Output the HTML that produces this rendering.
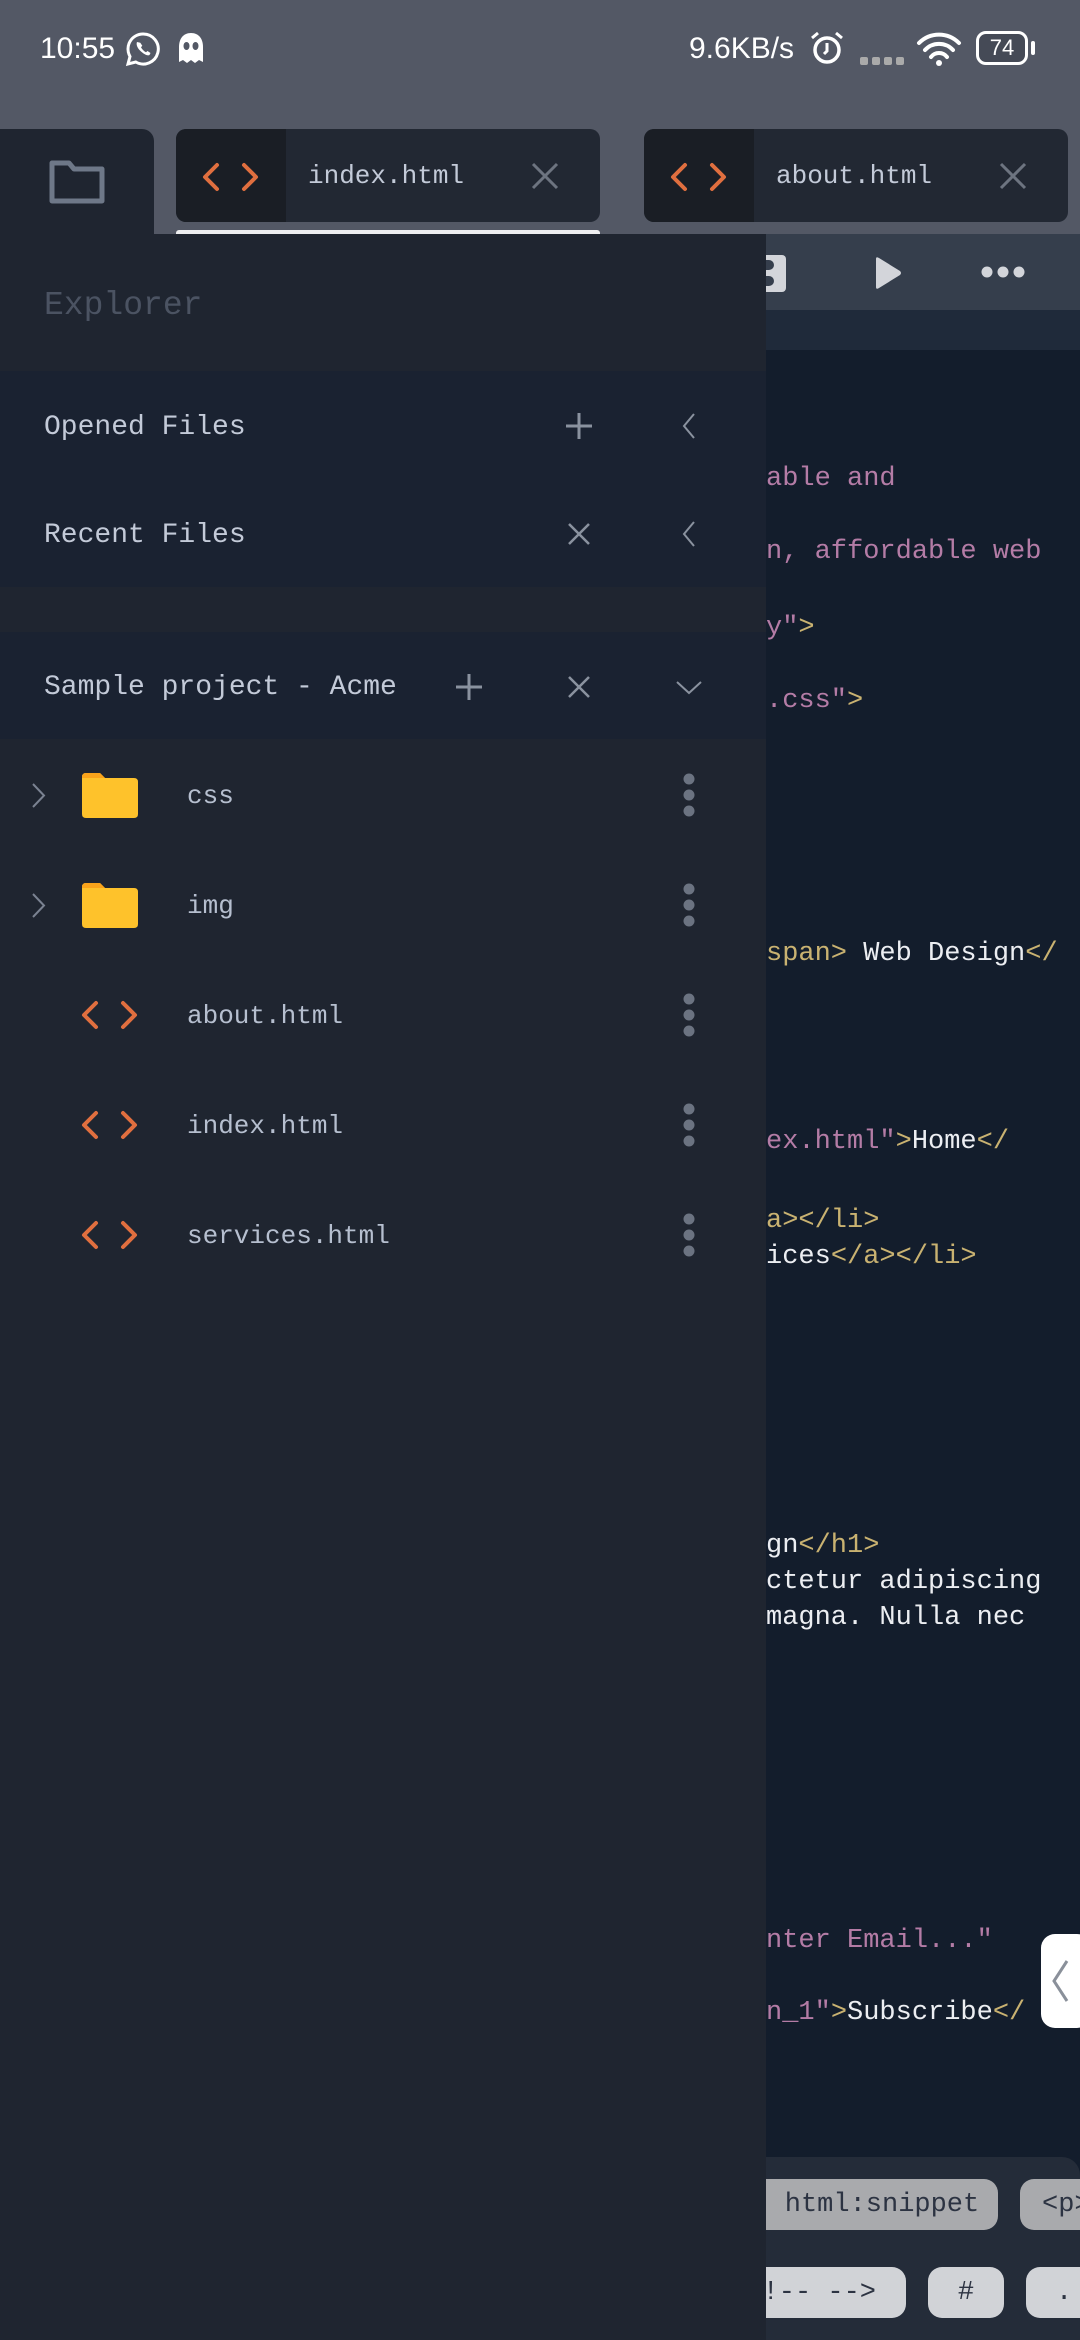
<!DOCTYPE html>
<html><head><meta charset="utf-8"><style>
*{margin:0;padding:0;box-sizing:border-box}
body{width:1080px;height:2340px;overflow:hidden;background:#535865;position:relative;font-family:"Liberation Mono",monospace}
.a{position:absolute}
.st{color:#fff;font-family:"Liberation Sans",sans-serif;font-size:30px}
.lbl{color:#c3cad8;font-size:28px;white-space:nowrap}
.tr{color:#b6bfcf;font-size:26px;white-space:nowrap}
.code{font-size:27px;white-space:pre;line-height:36px}
.p{color:#b47ca6}.y{color:#c9b271}.w{color:#eceef2}
.chip{position:absolute;border-radius:14px;font-size:27px;color:#2c3342;display:flex;align-items:center;justify-content:center}
</style></head><body>
<div class="a st" style="left:40px;top:32px">10:55</div>
<svg class="a" style="left:125px;top:31px" width="36" height="36" viewBox="0 0 36 36"><path d="M18 3a15 15 0 0 0-13 22.5L3 33l7.8-2A15 15 0 1 0 18 3z" fill="none" stroke="#fff" stroke-width="3"/><path d="M12 11c-1 2 0 6 4 9.5s7 4.5 8.5 3.5l1-2-3-2-1.5 1.2c-2-1-4-3-5-5l1.3-1.5-2-3z" fill="#fff"/></svg>
<svg class="a" style="left:177px;top:32px" width="28" height="32" viewBox="0 0 28 32"><path d="M14 1C6 1 2 7 2 15v15l4-2 4 3 4-3 4 3 4-3 4 2V15C26 7 22 1 14 1z" fill="#fff"/><ellipse cx="9.5" cy="14" rx="3" ry="4" fill="#535865"/><ellipse cx="18.5" cy="14" rx="3" ry="4" fill="#535865"/></svg>
<div class="a st" style="left:689px;top:32px">9.6KB/s</div>
<svg class="a" style="left:808px;top:30px" width="38" height="36" viewBox="0 0 38 36"><circle cx="19" cy="20" r="12" fill="none" stroke="#fff" stroke-width="3.5"/><path d="M19 13v8l-3 3" stroke="#fff" stroke-width="3" fill="none"/><path d="M4 8l6-5M34 8l-6-5" stroke="#fff" stroke-width="3"/></svg>
<div class="a" style="left:860px;top:57px;width:44px;height:10px;display:flex;gap:4px"><i style="width:8px;height:8px;background:#aaa;border-radius:2px;display:block"></i><i style="width:8px;height:8px;background:#aaa;border-radius:2px;display:block"></i><i style="width:8px;height:8px;background:#aaa;border-radius:2px;display:block"></i><i style="width:8px;height:8px;background:#aaa;border-radius:2px;display:block"></i></div>
<svg class="a" style="left:915px;top:31px" width="48" height="36" viewBox="0 0 48 36"><path d="M4 12a28 28 0 0 1 40 0M10 19a19 19 0 0 1 28 0M16 26a10 10 0 0 1 16 0" fill="none" stroke="#fff" stroke-width="4" stroke-linecap="round"/><circle cx="24" cy="32" r="3" fill="#fff"/></svg>
<div class="a" style="left:976px;top:31px;width:52px;height:34px;border:3px solid #fff;border-radius:10px;background:#454a56;color:#fff;font-family:'Liberation Sans',sans-serif;font-size:22px;text-align:center;line-height:28px">74</div>
<div class="a" style="left:1031px;top:41px;width:4px;height:14px;background:#fff;border-radius:2px"></div>

<div class="a" style="left:0;top:129px;width:154px;height:120px;background:#1f2530;border-top-right-radius:12px"></div>
<svg class="a" style="left:48px;top:158px" width="58" height="48" viewBox="0 0 58 48"><path d="M4 5h17l5 6h28v32H4z" fill="none" stroke="#6e7888" stroke-width="5" stroke-linejoin="round"/></svg>
<div class="a" style="left:176px;top:129px;width:424px;height:93px;background:#222833;border-radius:10px;overflow:hidden"><div style="width:110px;height:100%;background:#1a1e25"></div></div>
<svg class="a" style="left:200px;top:162px" width="62" height="30" viewBox="0 0 62 30"><path d="M17 3L5 15l12 12M44 3l12 12-12 12" fill="none" stroke="#e06f3f" stroke-width="4" stroke-linecap="round" stroke-linejoin="round"/></svg>
<div class="a tr" style="left:308px;top:161px;color:#c3cad8">index.html</div>
<svg class="a" style="left:530px;top:161px" width="30" height="30" viewBox="0 0 30 30"><path d="M3 3l24 24M27 3L3 27" stroke="#6d7480" stroke-width="3"/></svg>
<div class="a" style="left:176px;top:230px;width:424px;height:6px;background:#eeeef0;border-radius:3px 3px 0 0"></div>
<div class="a" style="left:644px;top:129px;width:424px;height:93px;background:#222833;border-radius:10px;overflow:hidden"><div style="width:110px;height:100%;background:#1a1e25"></div></div>
<svg class="a" style="left:668px;top:162px" width="62" height="30" viewBox="0 0 62 30"><path d="M17 3L5 15l12 12M44 3l12 12-12 12" fill="none" stroke="#e06f3f" stroke-width="4" stroke-linecap="round" stroke-linejoin="round"/></svg>
<div class="a tr" style="left:776px;top:161px;color:#c3cad8">about.html</div>
<svg class="a" style="left:998px;top:161px" width="30" height="30" viewBox="0 0 30 30"><path d="M3 3l24 24M27 3L3 27" stroke="#6d7480" stroke-width="3"/></svg>

<div class="a" style="left:766px;top:234px;width:314px;height:76px;background:#353e4c"></div>
<div class="a" style="left:766px;top:310px;width:314px;height:40px;background:#1f2a3a"></div>
<div class="a" style="left:766px;top:350px;width:314px;height:1990px;background:#131d2c"></div>
<div class="a" style="left:766px;top:255px;width:20px;height:37px;background:#d3d5da;border-radius:0 4px 4px 0"></div>
<div class="a" style="left:766px;top:260px;width:8px;height:10px;background:#353e4c;border-radius:0 5px 5px 0"></div>
<div class="a" style="left:766px;top:276px;width:8px;height:10px;background:#353e4c;border-radius:0 5px 5px 0"></div>
<svg class="a" style="left:872px;top:255px" width="32" height="36" viewBox="0 0 32 36"><path d="M4 4Q4 1 7 3L28 16Q30 18 28 20L7 33Q4 35 4 32z" fill="#d3d5da"/></svg>
<svg class="a" style="left:980px;top:265px" width="46" height="14" viewBox="0 0 46 14"><circle cx="7" cy="7" r="5.5" fill="#d3d5da"/><circle cx="23" cy="7" r="5.5" fill="#d3d5da"/><circle cx="39" cy="7" r="5.5" fill="#d3d5da"/></svg>

<div class="a code" style="left:766px;top:461px"><span class="p">able and</span></div>
<div class="a code" style="left:766px;top:534px"><span class="p">n, affordable web</span></div>
<div class="a code" style="left:766px;top:610px"><span class="p">y"</span><span class="y">&gt;</span></div>
<div class="a code" style="left:766px;top:683px"><span class="p">.css"</span><span class="y">&gt;</span></div>
<div class="a code" style="left:766px;top:936px"><span class="y">span&gt;</span><span class="w"> Web Design</span><span class="y">&lt;/</span></div>
<div class="a code" style="left:766px;top:1124px"><span class="p">ex.html"</span><span class="y">&gt;</span><span class="w">Home</span><span class="y">&lt;/</span></div>
<div class="a code" style="left:766px;top:1203px"><span class="y">a&gt;&lt;/li&gt;</span></div>
<div class="a code" style="left:766px;top:1239px"><span class="w">ices</span><span class="y">&lt;/a&gt;&lt;/li&gt;</span></div>
<div class="a code" style="left:766px;top:1528px"><span class="w">gn</span><span class="y">&lt;/h1&gt;</span></div>
<div class="a code" style="left:766px;top:1564px"><span class="w">ctetur adipiscing</span></div>
<div class="a code" style="left:766px;top:1600px"><span class="w">magna. Nulla nec</span></div>
<div class="a code" style="left:766px;top:1923px"><span class="p">nter Email..."</span></div>
<div class="a code" style="left:766px;top:1995px"><span class="p">n_1"</span><span class="y">&gt;</span><span class="w">Subscribe</span><span class="y">&lt;/</span></div>

<div class="a" style="left:1041px;top:1934px;width:50px;height:94px;background:#fff;border-radius:14px"></div>
<svg class="a" style="left:1050px;top:1958px" width="20" height="46" viewBox="0 0 20 46"><path d="M17 3L4 23l13 20" fill="none" stroke="#8a909a" stroke-width="3"/></svg>

<div class="a" style="left:740px;top:2157px;width:340px;height:183px;background:#242c39;border-top-right-radius:18px"></div>
<div class="chip" style="left:752px;top:2179px;width:246px;height:51px;background:#a9aaad;padding-left:14px">html:snippet</div>
<div class="chip" style="left:1020px;top:2179px;width:120px;height:51px;background:#a9aaad;justify-content:flex-start;padding-left:22px">&lt;p&gt;</div>
<div class="chip" style="left:740px;top:2267px;width:166px;height:51px;background:#d1d3d7;justify-content:flex-end;padding-right:30px">!-- --&gt;</div>
<div class="chip" style="left:928px;top:2267px;width:76px;height:51px;background:#d1d3d7">#</div>
<div class="chip" style="left:1026px;top:2267px;width:100px;height:51px;background:#d1d3d7;justify-content:flex-start;padding-left:30px">.</div>

<div class="a" style="left:0;top:234px;width:766px;height:2106px;background:#1f2530"></div>
<div class="a" style="left:44px;top:287px;color:#4b5362;font-size:33px">Explorer</div>
<div class="a" style="left:0;top:371px;width:766px;height:216px;background:#1a2231"></div>
<div class="a" style="left:0;top:632px;width:766px;height:107px;background:#1a2231"></div>
<div class="a lbl" style="left:44px;top:412px">Opened Files</div>
<div class="a lbl" style="left:44px;top:520px">Recent Files</div>
<div class="a lbl" style="left:44px;top:672px">Sample project - Acme</div>
<svg class="a" style="left:564px;top:411px" width="30" height="30" viewBox="0 0 30 30"><path d="M15 2v26M2 15h26" stroke="#8a929f" stroke-width="3"/></svg>
<svg class="a" style="left:566px;top:521px" width="26" height="26" viewBox="0 0 26 26"><path d="M3 3l20 20M23 3L3 23" stroke="#8a929f" stroke-width="2.5"/></svg>
<svg class="a" style="left:680px;top:412px" width="18" height="28" viewBox="0 0 18 28"><path d="M14 2L4 14l10 12" fill="none" stroke="#8a929f" stroke-width="2"/></svg>
<svg class="a" style="left:680px;top:520px" width="18" height="28" viewBox="0 0 18 28"><path d="M14 2L4 14l10 12" fill="none" stroke="#8a929f" stroke-width="2"/></svg>
<svg class="a" style="left:454px;top:672px" width="30" height="30" viewBox="0 0 30 30"><path d="M15 2v26M2 15h26" stroke="#8a929f" stroke-width="3"/></svg>
<svg class="a" style="left:566px;top:674px" width="26" height="26" viewBox="0 0 26 26"><path d="M3 3l20 20M23 3L3 23" stroke="#8a929f" stroke-width="2.5"/></svg>
<svg class="a" style="left:675px;top:678px" width="28" height="18" viewBox="0 0 28 18"><path d="M2 4l12 11L26 4" fill="none" stroke="#8a929f" stroke-width="2"/></svg>

<svg class="a" style="left:30px;top:782px" width="18" height="27" viewBox="0 0 18 27"><path d="M3 2l11 11.5L3 25" fill="none" stroke="#7a8291" stroke-width="2"/></svg>
<svg class="a" style="left:82px;top:773px" width="56" height="45" viewBox="0 0 56 45"><path d="M0 4Q0 0 4 0h14l5 5h29q4 0 4 4v32q0 4-4 4H4q-4 0-4-4z" fill="#fec22b"/><path d="M0 4Q0 0 4 0h14l5 5H0z" fill="#f9a31b"/></svg>
<div class="a tr" style="left:187px;top:781px">css</div>
<svg class="a" style="left:30px;top:892px" width="18" height="27" viewBox="0 0 18 27"><path d="M3 2l11 11.5L3 25" fill="none" stroke="#7a8291" stroke-width="2"/></svg>
<svg class="a" style="left:82px;top:883px" width="56" height="45" viewBox="0 0 56 45"><path d="M0 4Q0 0 4 0h14l5 5h29q4 0 4 4v32q0 4-4 4H4q-4 0-4-4z" fill="#fec22b"/><path d="M0 4Q0 0 4 0h14l5 5H0z" fill="#f9a31b"/></svg>
<div class="a tr" style="left:187px;top:891px">img</div>
<svg class="a" style="left:79px;top:1000px" width="62" height="30" viewBox="0 0 62 30"><path d="M17 3L5 15l12 12M44 3l12 12-12 12" fill="none" stroke="#e06f3f" stroke-width="4" stroke-linecap="round" stroke-linejoin="round"/></svg>
<div class="a tr" style="left:187px;top:1001px">about.html</div>
<svg class="a" style="left:79px;top:1110px" width="62" height="30" viewBox="0 0 62 30"><path d="M17 3L5 15l12 12M44 3l12 12-12 12" fill="none" stroke="#e06f3f" stroke-width="4" stroke-linecap="round" stroke-linejoin="round"/></svg>
<div class="a tr" style="left:187px;top:1111px">index.html</div>
<svg class="a" style="left:79px;top:1220px" width="62" height="30" viewBox="0 0 62 30"><path d="M17 3L5 15l12 12M44 3l12 12-12 12" fill="none" stroke="#e06f3f" stroke-width="4" stroke-linecap="round" stroke-linejoin="round"/></svg>
<div class="a tr" style="left:187px;top:1221px">services.html</div>
<svg class="a" style="left:682px;top:772px" width="14" height="490" viewBox="0 0 14 490"><g fill="#6b7381"><circle cx="7" cy="7" r="5.5"/><circle cx="7" cy="23" r="5.5"/><circle cx="7" cy="39" r="5.5"/><circle cx="7" cy="117" r="5.5"/><circle cx="7" cy="133" r="5.5"/><circle cx="7" cy="149" r="5.5"/><circle cx="7" cy="227" r="5.5"/><circle cx="7" cy="243" r="5.5"/><circle cx="7" cy="259" r="5.5"/><circle cx="7" cy="337" r="5.5"/><circle cx="7" cy="353" r="5.5"/><circle cx="7" cy="369" r="5.5"/><circle cx="7" cy="447" r="5.5"/><circle cx="7" cy="463" r="5.5"/><circle cx="7" cy="479" r="5.5"/></g></svg>
</body></html>
